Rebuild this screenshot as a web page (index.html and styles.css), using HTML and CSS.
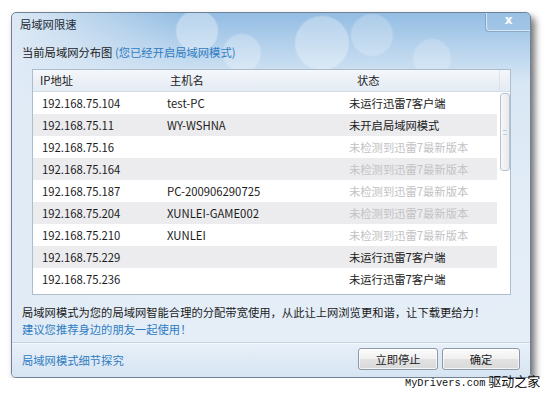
FILE: index.html
```html
<!DOCTYPE html>
<html lang="zh-CN">
<head>
  <meta charset="UTF-8" />
  <title>局域网限速</title>
  <link rel="stylesheet" href="styles.css">
</head>
<body>
  <div class="janela">
    <div class="titulo">
      <span class="titulo-texto">局域网限速</span>
      <span class="fechar">x</span>
    </div>

    <div class="subtitulo">当前局域网分布图 <span class="azul">(您已经开启局域网模式)</span></div>

    <div class="lista">
      <div class="cabecalho">
        <div class="c1">IP地址</div>
        <div class="c2">主机名</div>
        <div class="c3">状态</div>
        <div class="c4"></div>
      </div>
      <div class="corpo">
        <div class="linhas">
          <div class="linha"><span class="c1">192.168.75.104</span><span class="c2">test-PC</span><span class="c3">未运行迅雷7客户端</span></div>
          <div class="linha par"><span class="c1">192.168.75.11</span><span class="c2">WY-WSHNA</span><span class="c3">未开启局域网模式</span></div>
          <div class="linha"><span class="c1">192.168.75.16</span><span class="c2"></span><span class="c3 cinza">未检测到迅雷7最新版本</span></div>
          <div class="linha par"><span class="c1">192.168.75.164</span><span class="c2"></span><span class="c3 cinza">未检测到迅雷7最新版本</span></div>
          <div class="linha"><span class="c1">192.168.75.187</span><span class="c2">PC-200906290725</span><span class="c3 cinza">未检测到迅雷7最新版本</span></div>
          <div class="linha par"><span class="c1">192.168.75.204</span><span class="c2">XUNLEI-GAME002</span><span class="c3 cinza">未检测到迅雷7最新版本</span></div>
          <div class="linha"><span class="c1">192.168.75.210</span><span class="c2">XUNLEI</span><span class="c3 cinza">未检测到迅雷7最新版本</span></div>
          <div class="linha par"><span class="c1">192.168.75.229</span><span class="c2"></span><span class="c3">未运行迅雷7客户端</span></div>
          <div class="linha"><span class="c1">192.168.75.236</span><span class="c2"></span><span class="c3">未运行迅雷7客户端</span></div>
        </div>
        <div class="rolagem">
          <div class="barra"><span class="grip"></span></div>
        </div>
      </div>
    </div>

    <div class="aviso">
      局域网模式为您的局域网智能合理的分配带宽使用，从此让上网浏览更和谐，让下载更给力！<br>
      <span class="azul">建议您推荐身边的朋友一起使用！</span>
    </div>

    <div class="rodape">
      <span class="link">局域网模式细节探究</span>
      <div class="botoes">
        <span class="botao largo">立即停止</span>
        <span class="botao">确定</span>
      </div>
    </div>
  </div>

  <div class="marca"><span class="mono">MyDrivers.com</span> 驱动之家</div>
</body>
</html>
```

FILE: styles.css
```css
body {
  margin: 0;
  background: #fff;
  font-family: "Noto Sans CJK SC", "Noto Sans", sans-serif;
  font-size: 11.3px;
  color: #1b1b1b;
}
.janela {
  margin: 12px 0 0 11px;
  width: 518px;
  height: 364px;
  border: 1px solid #6f8194;
  border-radius: 5px;
  box-shadow: 4px 5px 7px rgba(0, 0, 0, 0.55);
  background:
    radial-gradient(circle at 185px 18px, rgba(255,255,255,0.35) 0 20px, rgba(255,255,255,0) 22px),
    radial-gradient(circle at 230px 40px, rgba(255,255,255,0.25) 0 18px, rgba(255,255,255,0) 20px),
    radial-gradient(circle at 310px 30px, rgba(255,255,255,0.3) 0 26px, rgba(255,255,255,0) 28px),
    radial-gradient(circle at 360px 22px, rgba(255,255,255,0.22) 0 20px, rgba(255,255,255,0) 22px),
    radial-gradient(circle at 420px 45px, rgba(255,255,255,0.2) 0 18px, rgba(255,255,255,0) 20px),
    linear-gradient(to right, rgba(224,235,246,0.95) 0, rgba(224,235,246,0) 170px),
    linear-gradient(to bottom, #93bde3 0, #bcd6ee 40px, #d8e7f4 70px, #e3edf7 200px, #e6eff8 100%);
  overflow: hidden;
}
.titulo {
  display: flex;
  justify-content: space-between;
  align-items: flex-start;
  height: 22px;
}
.titulo-texto {
  padding-left: 8px;
  line-height: 22px;
  color: #1e2a36;
}
.fechar {
  width: 43px;
  height: 17px;
  line-height: 14px;
  text-align: center;
  color: #fff;
  font-family: "DejaVu Sans", sans-serif;
  font-weight: bold;
  font-size: 12px;
  border-left: 1px solid rgba(255,255,255,0.6);
  border-bottom: 1px solid rgba(255,255,255,0.6);
  border-bottom-left-radius: 4px;
  background: rgba(160, 195, 228, 0.5);
  box-shadow: -1px 1px 0 rgba(80,110,140,0.35);
}
.subtitulo {
  margin: 9px 0 0 10px;
  line-height: 16px;
}
.azul {
  color: #2f7cc1;
}
.lista {
  margin: 9px 19px 0 20px;
  height: 224px;
  border: 1px solid #aebdcc;
  background: #fff;
  overflow: hidden;
}
.cabecalho {
  display: flex;
  height: 21px;
  line-height: 21px;
  border-bottom: 1px solid #d3dce6;
  background: linear-gradient(to bottom, #f4f7fb, #e4ebf3);
}
.cabecalho .c1 { width: 127px; padding-left: 7px; }
.cabecalho .c2 { width: 179px; padding-left: 3px; }
.cabecalho .c3 { width: 142px; padding-left: 8px; }
.cabecalho .c4 { flex: 1; border-left: 1px solid #dbe3ec; }
.corpo {
  display: flex;
}
.linhas {
  width: 464px;
}
.linha {
  display: flex;
  height: 22px;
  line-height: 22px;
}
.par {
  background: #ececee;
}
.linha .c1 { width: 125px; padding-left: 9px; }
.linha .c2 { width: 182px; }
.linha .c3 { flex: 1; }
.cinza {
  color: #c2c2c4;
}
.rolagem {
  flex: 1;
  padding: 1px 0 0 3px;
}
.barra {
  display: flex;
  align-items: center;
  justify-content: center;
  width: 8px;
  height: 76px;
  border: 1px solid #b9c3cd;
  border-radius: 3px;
  background: linear-gradient(to right, #f6f7f9, #e7eaee);
}
.grip {
  width: 4px;
  height: 3px;
  border-top: 1px solid #c5ccd4;
  border-bottom: 1px solid #c5ccd4;
}
.aviso {
  margin: 9px 0 0 10px;
  line-height: 17px;
}
.rodape {
  display: flex;
  justify-content: space-between;
  margin-top: 4px;
  height: 29px;
  padding: 5px 10px 0 10px;
  border-top: 1px solid #c6d4e2;
  box-shadow: inset 0 1px 0 #f4f8fc;
  background: linear-gradient(to bottom, #e8f0f9, #d6e4f2);
}
.link {
  color: #2f7cc1;
  line-height: 22px;
  margin-top: 1px;
}
.botoes {
  display: flex;
  gap: 4px;
}
.botao {
  width: 76px;
  height: 20px;
  line-height: 20px;
  text-align: center;
  border: 1px solid #8c99a6;
  border-radius: 3px;
  background: linear-gradient(to bottom, #fbfbfb 0, #f0f0f0 50%, #e2e2e2 51%, #d9d9d9 100%);
  box-shadow: inset 0 0 0 1px rgba(255,255,255,0.7);
}
.botao.largo {
  width: 78px;
}
.marca {
  position: absolute;
  top: 372px;
  left: 405px;
  font-size: 13px;
  color: #111;
  line-height: 18px;
}
.mono {
  font-family: "Liberation Mono", monospace;
  font-size: 10.3px;
}
```
